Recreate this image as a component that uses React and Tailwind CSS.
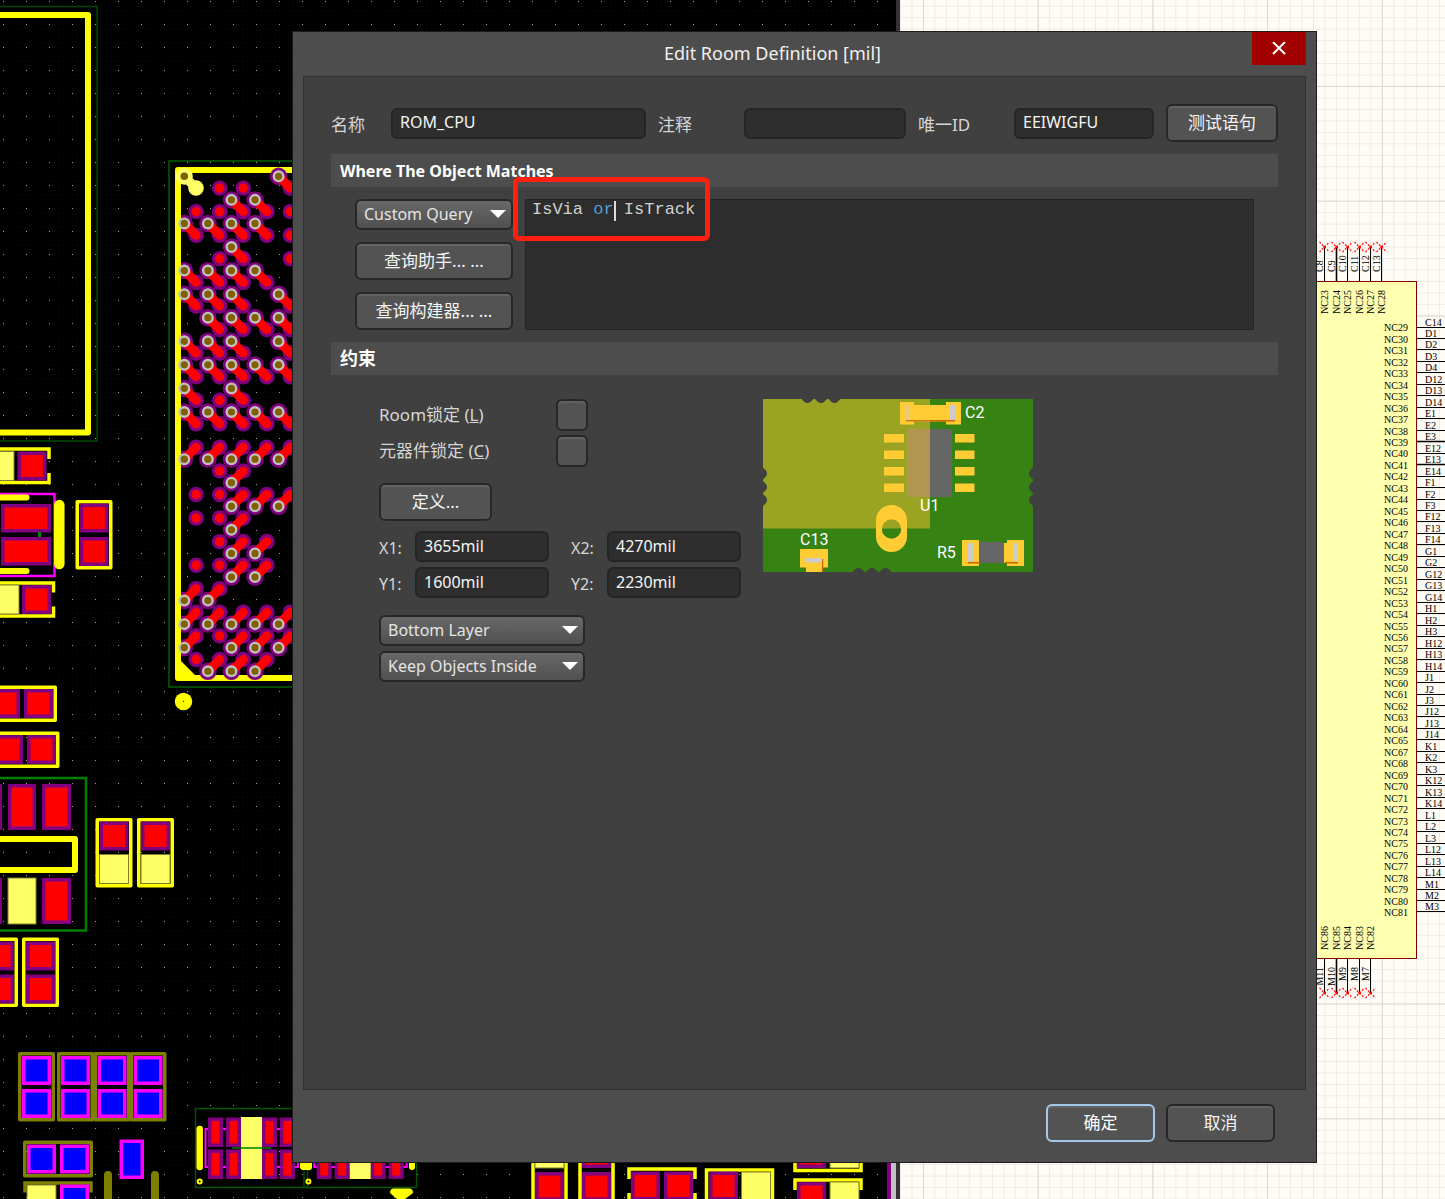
import React from "react";

const YELLOW = "#ffff00";
const LIGHT = "#ffff66";
const RED = "#ff0000";
const PURPLE = "#800080";
const MAGENTA = "#ff00ff";
const OLIVE = "#808000";
const BLUE = "#0000ff";

/* ---------- PCB view ---------- */

const PITCH = 23.57;
const colX = (c) => 184.3 + c * PITCH;
const rowY = (r) => 176.3 + r * PITCH;

// [row, columns with a via, columns with a bare pad half a pitch away]
const UPPER = [
  [0, [4], [1, 2]],
  [1, [2, 3], [0, 1, 4]],
  [2, [0, 1, 2, 3], [4]],
  [3, [2], [1, 4]],
  [4, [0, 1, 2, 3], []],
  [5, [0, 1, 2, 4], []],
  [6, [1, 2, 3, 4], []],
  [7, [0, 1, 2, 4], []],
  [8, [0, 1, 2, 3, 4], []],
  [9, [0, 2], [1]],
  [10, [0, 1, 2, 3, 4], []],
];
const LOWER = [
  [12, [0, 1, 2, 3, 4], []],
  [13, [2], [1]],
  [14, [2, 3, 4], [0, 1]],
  [15, [2], [0, 1]],
  [16, [2, 3], [1]],
  [17, [2, 3], [0, 1]],
  [18, [0, 1], []],
  [19, [0, 1, 2, 3, 4], []],
  [20, [0, 2, 3, 4], [1]],
  [21, [1, 2, 3], [0]],
];
const h = PITCH / 2;
const vias = [];
const pads = [];
UPPER.forEach(([r, v, p]) => {
  v.forEach((c) => vias.push([colX(c), rowY(r), h]));
  p.forEach((c) => pads.push([colX(c) + h, rowY(r) + h]));
});
LOWER.forEach(([r, v, p]) => {
  v.forEach((c) => vias.push([colX(c), rowY(r), -h]));
  p.forEach((c) => pads.push([colX(c) + h, rowY(r) - h]));
});

function Pad({ x, y, w = 29, h: ht = 29, outer = PURPLE, inner = RED }) {
  return (
    <g>
      <rect x={x} y={y} width={w} height={ht} fill={outer} />
      <rect x={x + 3.5} y={y + 3.5} width={w - 7} height={ht - 7} fill={inner} />
    </g>
  );
}
function Light({ x, y, w = 29, h: ht = 29 }) {
  return <rect x={x} y={y} width={w} height={ht} fill={LIGHT} stroke="#808030" strokeWidth="1" />;
}
function Frame({ x, y, w, h: ht, s = 3.5, c = YELLOW }) {
  return (
    <rect x={x + s / 2} y={y + s / 2} width={w - s} height={ht - s} fill="none" stroke={c} strokeWidth={s} strokeLinejoin="round" />
  );
}
function BluePad(props) {
  return <Pad outer={MAGENTA} inner={BLUE} {...props} />;
}

function Bga() {
  return (
    <g>
      <rect x="169" y="161" width="240" height="526" fill="none" stroke="#004800" strokeWidth="2" />
      <rect x="178" y="170" width="240" height="508" fill="none" stroke={YELLOW} strokeWidth="6" strokeLinejoin="round" />
      <path d="M181 661l14 14h-14z" fill={YELLOW} />
      {vias.map(([x, y, d], i) => (
        <g key={i} fill={PURPLE}>
          <circle cx={x} cy={y} r="8.7" />
          <circle cx={x + h} cy={y + d} r="7.8" />
        </g>
      ))}
      {pads.map(([x, y], i) => (
        <g key={i}>
          <circle cx={x} cy={y} r="7.7" fill={PURPLE} />
          <circle cx={x} cy={y} r="4.7" fill={RED} />
        </g>
      ))}
      <path d="M178 170V678" stroke={YELLOW} strokeWidth="6" />
      {vias.map(([x, y, d], i) => (
        <g key={i}>
          <path d={`M${x} ${y}L${x + h} ${y + d}`} stroke={RED} strokeWidth="9" strokeLinecap="round" />
          <circle cx={x} cy={y} r="4.8" fill="#806000" stroke="#c0c0c0" strokeWidth="2.4" />
        </g>
      ))}
      <path d="M184 176L196 188" stroke={LIGHT} strokeWidth="9" />
      <circle cx="184.3" cy="176.3" r="8.5" fill={LIGHT} />
      <circle cx="196" cy="188" r="7.8" fill={LIGHT} />
      <circle cx="184.3" cy="176.3" r="3.8" fill="#806000" />
      <circle cx="183.5" cy="701.5" r="8.7" fill={YELLOW} />
      <circle cx="183.5" cy="701.5" r="0.7" fill="#404000" />
    </g>
  );
}

function LeftParts() {
  return (
    <g>
      <path d="M0 6.500H97V441H0" fill="none" stroke="#004800" strokeWidth="1.5" />
      <path d="M0 15H88V432.500H0" fill="none" stroke={YELLOW} strokeWidth="6" strokeLinejoin="round" />

      <path d="M0 449H49V459M49 473V482.500H0" fill="none" stroke={YELLOW} strokeWidth="3.5" />
      <Light x={-10} y={451.5} w={24} />
      <Pad x={17.5} y={451.5} />

      <path d="M0 494H54.500V576H0" fill="none" stroke={MAGENTA} strokeWidth="2.5" />
      <path d="M0 497.500H26.500M0 571H26.500" stroke={YELLOW} strokeWidth="6" strokeLinecap="round" />
      <Pad x={1} y={504} w={50} h={28.5} />
      <Pad x={1} y={537} w={50} h={28.5} />
      <rect x="38" y="532" width="3" height="5" fill="#008000" />
      <path d="M59.300 505V564" stroke={YELLOW} strokeWidth="10.500" strokeLinecap="round" />

      <Frame x={75.5} y={500} w={37} h={69.500} />
      <Pad x={79.5} y={503.5} />
      <Pad x={79.5} y={537} />

      <path d="M0 583H53.500V592.500M53.500 606.500V616H0" fill="none" stroke={YELLOW} strokeWidth="3.5" />
      <Light x={-10} y={585} w={29} />
      <Pad x={22} y={585} />

      <Frame x={-20} y={685.5} w={77} h={36.5} />
      <Pad x={-9} y={689} />
      <Pad x={24} y={689} />
      <Frame x={-20} y={731.5} w={79.500} h={36.5} />
      <Pad x={-6} y={735} />
      <Pad x={27} y={735} />

      <path d="M0 778H86V930.500H0" fill="none" stroke="#008000" strokeWidth="2.5" />
      <rect x="0" y="784" width="2" height="46" fill={PURPLE} />
      <rect x="0" y="878" width="2" height="46" fill={PURPLE} />
      <Pad x={8} y={784} w={28} h={46} />
      <Pad x={42} y={784} w={29} h={46} />
      <path d="M0 839H75V870H0" fill="none" stroke={YELLOW} strokeWidth="6" strokeLinejoin="round" />
      <Light x={8} y={878} w={28} h={46} />
      <Pad x={42} y={878} w={29} h={46} />

      {[95.5, 137].map((x) => (
        <g key={x}>
          <Frame x={x} y={818} w={37} h={69.5} />
          <Pad x={x + 4} y={821.5} />
          <Light x={x + 4} y={854.5} />
        </g>
      ))}
      {[-19, 22].map((x) => (
        <g key={x}>
          <Frame x={x} y={937.5} w={37} h={69.5} />
          <Pad x={x + 4} y={941.5} />
          <Pad x={x + 4} y={974.5} />
        </g>
      ))}
    </g>
  );
}

function BottomParts() {
  return (
    <g>
      {[18, 57, 93.5, 129.5].map((x) => (
        <g key={x}>
          <Frame x={x} y={1052} w={37} h={69.5} c={OLIVE} />
          <BluePad x={x + 4} y={1056} />
          <BluePad x={x + 4} y={1089} />
        </g>
      ))}
      <Frame x={23} y={1140.5} w={70} h={37} c={OLIVE} />
      <BluePad x={27} y={1144.5} />
      <BluePad x={60} y={1144.5} />
      <path d="M25 1192.500V1183H91V1192.500" fill="none" stroke={OLIVE} strokeWidth="3.5" />
      <Light x={27} y={1185} />
      <BluePad x={60} y={1184.5} />
      <BluePad x={119.500} y={1139.500} w={24.500} h={39.500} />
      <path d="M108 1175V1210M155 1175V1210" stroke={OLIVE} strokeWidth="8" strokeLinecap="round" />

      <path d="M195.500 1108.500H416.500V1187.500H195.500ZM304 1108V1187M307.500 1108V1187" fill="none" stroke="#005800" strokeWidth="1.300" />
      {[0, 108.7].map((o) => (
        <g key={o} transform={`translate(${o} 0)`}>
          <path d="M199.700 1129V1167" stroke={YELLOW} strokeWidth="6.500" strokeLinecap="round" />
          <path d="M205.500 1129H298V1167H205.500Z" fill="none" stroke={MAGENTA} strokeWidth="2" />
          {[208, 226, 262, 280].map((x) => (
            <g key={x}>
              <Pad x={x} y={1117.5} w={15} h={29.500} />
              <Pad x={x} y={1149.500} w={15} h={29.500} />
            </g>
          ))}
          <rect x="241" y="1117" width="21" height="62" fill={LIGHT} />
          <path d="M232 1148H271" stroke="#008000" strokeWidth="1.500" />
          <circle cx="199.700" cy="1181.500" r="2" fill="none" stroke={YELLOW} strokeWidth="2" />
        </g>
      ))}
      <path d="M300 1150H312V1168L310 1170H302L300 1168Z" fill={YELLOW} />
      <path d="M412 1150V1167" stroke={YELLOW} strokeWidth="6" strokeLinecap="round" />
      <path d="M393 1188.500H410Q413 1189 413 1193L405 1199H397L390 1193Q390 1189 393 1188.500Z" fill={YELLOW} />

      <path d="M533 1150V1205M566 1150V1205M580 1150V1205M613 1150V1205" stroke={YELLOW} strokeWidth="3.500" />
      <Light x={535} y={1139} />
      <Pad x={535} y={1172} />
      <Pad x={582} y={1139} />
      <Pad x={582} y={1172} />
      <path d="M629 1179V1169H695V1179M629 1193V1205M695 1193V1205" fill="none" stroke={YELLOW} strokeWidth="3.500" />
      <Pad x={631} y={1171.5} />
      <Pad x={664} y={1171.5} />
      <path d="M706.500 1205V1170H772.500V1205" fill="none" stroke={YELLOW} strokeWidth="3.500" />
      <Pad x={709} y={1171.5} />
      <Light x={741.5} y={1172} />
      <path d="M795 1150V1170.500H861V1150M795 1190V1180H861V1190" fill="none" stroke={YELLOW} strokeWidth="3.500" />
      <Pad x={797} y={1139} />
      <Light x={830} y={1139} />
      <Pad x={797} y={1182} />
      <Light x={830} y={1182} />
      <rect x="887" y="1100" width="4" height="400" fill={PURPLE} />
      <rect x="891" y="1100" width="5" height="400" fill="#c0c0c0" />
    </g>
  );
}

function PcbView() {
  return (
    <svg className="absolute inset-y-0 left-0 h-full w-[900px] bg-black" aria-hidden="true">
      <defs>
        <pattern id="fine" x="3" y="1" width="4.600" height="4.600" patternUnits="userSpaceOnUse">
          <rect width="1" height="1" fill="#0c0c0c" />
        </pattern>
        <pattern id="coarse" x="3" y="1" width="23" height="23" patternUnits="userSpaceOnUse">
          <rect width="1" height="1" fill="#a0a0a0" />
        </pattern>
      </defs>
      <rect width="100%" height="100%" fill="url(#fine)" />
      <rect width="100%" height="100%" fill="url(#coarse)" />
      <Bga />
      <LeftParts />
      <BottomParts />
      <rect x="896" width="4" height="100%" fill="#333333" />
    </svg>
  );
}

/* ---------- Schematic view ---------- */

const RIGHT_PINS = (
  "C14 D1 D2 D3 D4 D12 D13 D14 E1 E2 E3 E12 E13 E14 F1 F2 F3 F12 F13 F14 G1 G2 G12 G13 G14 " +
  "H1 H2 H3 H12 H13 H14 J1 J2 J3 J12 J13 J14 K1 K2 K3 K12 K13 K14 L1 L2 L3 L12 L13 L14 M1 M2 M3"
).split(" ");
const TOP_PINS = [["C8", "NC23"], ["C9", "NC24"], ["C10", "NC25"], ["C11", "NC26"], ["C12", "NC27"], ["C13", "NC28"]];
const BOTTOM_PINS = [["M11", "NC86"], ["M10", "NC85"], ["M9", "NC84"], ["M8", "NC83"], ["M7", "NC82"]];
const STEP = 11.47;

function NoConnect({ x, y }) {
  return (
    <g>
      <path d={`M${x - 5} ${y - 5}L${x + 5} ${y + 5}M${x - 5} ${y + 5}L${x + 5} ${y - 5}`} stroke={RED} strokeWidth="1.200" strokeDasharray="2 1.500" />
      <circle cx={x} cy={y} r="1.300" fill={RED} />
    </g>
  );
}

function SchematicView() {
  return (
    <svg className="absolute inset-y-0 left-[900px] right-0 h-full w-[calc(100%-900px)] bg-[#fffcf6]" aria-hidden="true">
      <defs>
        <pattern id="minor" x="23" y="86" width="11.470" height="11.470" patternUnits="userSpaceOnUse">
          <path d="M0.500 0V12M0 0.500H12" stroke="#ecebe7" strokeWidth="1" />
        </pattern>
        <pattern id="major" x="23" y="86" width="114.700" height="114.700" patternUnits="userSpaceOnUse">
          <path d="M0.500 0V115M0 0.500H115" stroke="#dad9d6" strokeWidth="1" />
        </pattern>
      </defs>
      <rect width="100%" height="100%" fill="url(#minor)" />
      <rect width="100%" height="100%" fill="url(#major)" />
      <g transform="translate(-900 0)" className="font-['Liberation_Serif',serif] text-[10px]">
        <rect x="1200" y="281.500" width="216.500" height="677" fill="#ffffb0" stroke="#800000" />
        {RIGHT_PINS.map((pin, i) => {
          const y = 327.3 + i * STEP;
          const line = Math.floor(y - 0.3);
          const n = i < 37 ? 29 + i : 30 + i;
          return (
            <g key={pin}>
              <path d={`M1417 ${line + 0.5}H2400`} stroke="#000" strokeWidth={i === 10 || i === 12 ? 1.6 : 1} />
              <text x="1425" y={line - 1}>{pin}</text>
              <text x="1408" y={Math.round(y + 4)} textAnchor="end">{"NC" + n}</text>
            </g>
          );
        })}
        {TOP_PINS.map(([pin, name], i) => {
          const x = Math.round(1324.6 + i * STEP - 0.5) + 0.5;
          return (
            <g key={pin}>
              <path d={`M${x} 247V281`} stroke="#000" strokeWidth={i === 1 ? 1.6 : 1} />
              <NoConnect x={x} y={247} />
              <text transform={`translate(${x - 2} 272) rotate(-90)`}>{pin}</text>
              <text transform={`translate(${x + 3} 314) rotate(-90)`}>{name}</text>
            </g>
          );
        })}
        {BOTTOM_PINS.map(([pin, name], i) => {
          const x = Math.round(1324.6 + i * STEP - 0.5) + 0.5;
          return (
            <g key={pin}>
              <path d={`M${x} 959V993`} stroke="#000" strokeWidth={i === 1 ? 1.6 : 1} />
              <NoConnect x={x} y={993} />
              <text transform={`translate(${x - 2} 967) rotate(-90)`} textAnchor="end">{pin}</text>
              <text transform={`translate(${x + 3} 950) rotate(-90)`}>{name}</text>
            </g>
          );
        })}
      </g>
    </svg>
  );
}

/* ---------- Room illustration ---------- */

function RoomPicture() {
  const gold = "#ffcc33";
  return (
    <svg className="h-[173px] w-[270px] shrink-0 font-['Roboto',sans-serif] text-[16px]" viewBox="0 0 270 173" aria-label="Room preview">
      <rect width="270" height="173" fill="#368212" />
      <rect width="167" height="129.500" fill="#9ba323" />
      <g fill="#404040">
        {[44.5, 58, 71.5].map((x) => <path key={x} d={`M${x - 6} 0h12l-3 3q-3 2 -6 0z`} />)}
        {[95.5, 109, 122.5].map((x) => <path key={x} d={`M${x - 6} 173h12l-3 -3q-3 -2 -6 0z`} />)}
        {[74.5, 88, 101].map((y) => (
          <path key={y} d={`M0 ${y - 6}v12l3 -3q2 -3 0 -6zM270 ${y - 6}v12l-3 -3q-2 -3 0 -6z`} />
        ))}
      </g>
      <g fill={gold}>
        <path d="M137 3h14v3h32v-3h15v22.500h-15v-3h-32v3h-14z" />
        {[35, 51.5, 68, 84.5].map((y) => (
          <path key={y} d={`M121 ${y}h20v8.500h-20zM192 ${y}h19.500v8.500h-19.500z`} />
        ))}
        <path fillRule="evenodd" d="M113 121.500a15.500 15.500 0 0 1 31 0v16a15.500 15.500 0 0 1 -31 0zM118.800 130a9.700 9.700 0 1 0 19.400 0a9.700 9.700 0 1 0 -19.400 0z" />
        <path d="M37 150h28v18.500h-5v4.500h-17v-4.500h-6zM199 141h17v26h-17zM241 144h3v-3h17v26h-17v-3h-3z" />
      </g>
      <path d="M143 21h24v1.500h-24z" fill="#d07818" />
      <path d="M167 21h25v1.500h-25zM205 163h12v1.500h-12zM242 163h13v1.500h-13zM59 160h1.200v13h-1.200z" fill="#cc6600" />
      <rect x="143" y="6" width="4" height="15" fill="#e6cc80" />
      <path d="M187 6h5v15h-5zM43 159h16v4.500h-16zM205 144h5v18.500h-5zM250 144h5v18.500h-5z" fill="#cccccc" />
      <rect x="144" y="30" width="23" height="68" fill="#b0964f" />
      <path d="M167 30h22v68h-22zM217 143h24v21h-24z" fill="#666666" />
      <g fill="#ffffff">
        <text x="202" y="19">C2</text>
        <text x="157" y="112">U1</text>
        <text x="37" y="146">C13</text>
        <text x="174" y="159">R5</text>
      </g>
    </svg>
  );
}

/* ---------- Controls ---------- */

const btn =
  "h-[38px] rounded-md border-2 border-[#272727] bg-[#535353] text-[17px] leading-6 text-[#f4f4f4] shadow-[inset_0_2px_1px_#646464]";
const field =
  "h-[31px] w-full min-w-0 rounded-md border-2 border-[#252525] bg-[#2e2e2e] px-[7px] pb-0.5 text-[16px] leading-6 text-[#f4f4f4] outline-none";

function Select({ label, value, className = "" }) {
  return (
    <div className={"relative h-[31px] " + className}>
      <select
        aria-label={label}
        defaultValue={value}
        className="h-full w-full appearance-none rounded-md border-2 border-[#272727] bg-linear-to-b from-[#686868] to-[#505050] pr-8 pb-0.5 pl-[7px] text-[16px] leading-6 text-[#e4e4e4] outline-none"
      >
        <option>{value}</option>
      </select>
      <svg className="pointer-events-none absolute top-[11px] right-[7px] h-2 w-4" viewBox="0 0 16 8" aria-hidden="true">
        <path d="M0 0H16L8 8Z" fill="#fff" />
      </svg>
    </div>
  );
}

function Coord({ id, value }) {
  return (
    <div className="flex items-center">
      <label htmlFor={id} className="w-9 pt-0.5 text-[16px] text-[#d6d6d6]">{id}:</label>
      <input id={id} defaultValue={value} className={field + " max-w-[134px]"} />
    </div>
  );
}

function Check({ id, children }) {
  return (
    <div className="flex h-8 items-center">
      <label htmlFor={id} className="w-[177px] text-[17px] text-[#d6d6d6]">{children}</label>
      <input
        id={id}
        type="checkbox"
        className="size-8 appearance-none rounded-md border-2 border-[#272727] bg-[#535353] shadow-[inset_0_2px_1px_#646464]"
      />
    </div>
  );
}

function QueryEditor() {
  const query = "IsVia or IsTrack";
  return (
    <div className="relative min-w-0 flex-1 border border-[#242424] bg-[#2d2d2d] font-['Liberation_Mono',monospace] text-[17px] leading-5">
      <pre aria-hidden="true" className="absolute inset-0 font-[inherit] px-1.5 text-[#d0d0d0]">
        IsVia <span className="text-[#569cd6]">or</span>
        <span className="absolute mt-px h-5 w-0.5 bg-[#dcdcdc]" /> IsTrack
      </pre>
      <textarea
        aria-label="Query"
        defaultValue={query}
        spellCheck="false"
        className="absolute inset-0 h-full w-full resize-none bg-transparent px-1.5 text-transparent outline-none"
      />
      <div className="pointer-events-none absolute -top-[23px] -left-[13px] h-16 w-[197px] rounded-md border-5 border-[#ff2010]" />
    </div>
  );
}

const bar = "flex h-[33px] items-center bg-[#4d4d4d] px-[9px] font-bold text-white";

export default function App() {
  return (
    <div className="relative flex min-h-screen flex-col overflow-hidden bg-black pt-[31px] pr-32 pb-9 pl-[292px] font-['Noto_Sans','Noto_Sans_CJK_SC',sans-serif]">
      <PcbView />
      <SchematicView />
      <div role="dialog" aria-labelledby="title" className="relative flex flex-1 flex-col border border-[#1c1c1c] bg-[#4d4d4d] px-2.5">
        <header className="flex h-11 items-start">
          <h1 id="title" className="flex-1 pt-[9px] pr-2.5 text-center text-[18px] leading-6 text-[#f0f0f0]">Edit Room Definition [mil]</h1>
          <button aria-label="Close" className="flex h-[33px] w-[54px] items-center justify-center bg-[#a00000]">
            <svg className="size-3.5" viewBox="0 0 14 14" aria-hidden="true">
              <path d="M1 0L13 12M13 0L1 12" stroke="#fff" strokeWidth="2" />
            </svg>
          </button>
        </header>

        <main className="flex-1 border border-[#303030] bg-[#404040] px-[27px] pt-[27px]">
          <div className="grid grid-cols-[60px_255fr_98px_162fr_108px_140fr_124px] items-center text-[17px] text-[#d6d6d6]">
            <label htmlFor="name" className="pt-1">名称</label>
            <input id="name" defaultValue="ROM_CPU" className={field} />
            <label htmlFor="comment" className="pt-1 pl-3">注释</label>
            <input id="comment" className={field} />
            <label htmlFor="uid" className="pt-1 pl-3">唯一ID</label>
            <input id="uid" defaultValue="EEIWIGFU" className={field} />
            <button className={btn + " ml-3"}>测试语句</button>
          </div>

          <h2 className={bar + " mt-3 text-[16px]"}>Where The Object Matches</h2>
          <div className="flex gap-3 px-6 py-3">
            <div className="flex w-[158px] shrink-0 flex-col gap-3">
              <Select label="Query kind" value="Custom Query" />
              <button className={btn}>查询助手... ...</button>
              <button className={btn}>查询构建器... ...</button>
            </div>
            <QueryEditor />
          </div>

          <h2 className={bar + " text-[18px]"}>约束</h2>
          <div className="flex gap-[22px] pt-6 pl-12">
            <div className="w-[362px]">
              <div className="flex flex-col gap-1">
                <Check id="roomLock">Room锁定 (<u>L</u>)</Check>
                <Check id="compLock">元器件锁定 (<u>C</u>)</Check>
              </div>
              <button className={btn + " mt-4 w-[113px]"}>定义...</button>
              <div className="mt-2.5 grid grid-cols-2 gap-x-[22px] gap-y-[5px]">
                <Coord id="X1" value="3655mil" />
                <Coord id="X2" value="4270mil" />
                <Coord id="Y1" value="1600mil" />
                <Coord id="Y2" value="2230mil" />
              </div>
              <Select label="Layer" value="Bottom Layer" className="mt-[17px] w-[206px]" />
              <Select label="Room mode" value="Keep Objects Inside" className="mt-[5px] w-[206px]" />
            </div>
            <RoomPicture />
          </div>
        </main>

        <footer className="flex h-[72px] justify-end gap-[11px] pt-3.5 pr-[31px]">
          <button className="h-[38px] w-[109px] rounded-md border-2 border-[#a3c9ea] bg-[#535353] text-[17px] text-white shadow-[inset_0_2px_1px_#646464]">确定</button>
          <button className={btn + " w-[109px]"}>取消</button>
        </footer>
      </div>
    </div>
  );
}
